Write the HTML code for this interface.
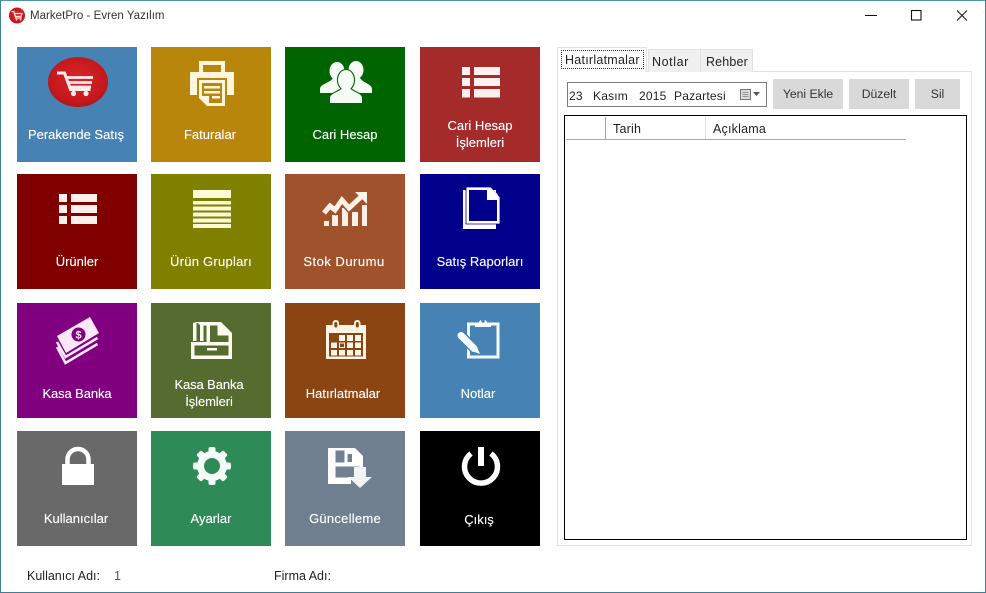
<!DOCTYPE html>
<html><head><meta charset="utf-8">
<style>
html,body{margin:0;padding:0;width:986px;height:593px;overflow:hidden;background:#fff}
body{position:relative;font-family:"Liberation Sans","DejaVu Sans",sans-serif;font-size:13px;color:#222}
#frame{position:absolute;left:0;top:0;width:984px;height:591px;border:1px solid #3f7f96;border-top-color:#4a93ad;pointer-events:none}
.t{position:absolute;width:120px;height:115px}
.l{position:absolute;left:0;width:120px;text-align:center;color:#fff;font-size:13px;line-height:17px;white-space:nowrap;text-shadow:0 0 .5px rgba(255,255,255,.7)}
.a{position:absolute;white-space:nowrap;line-height:16px}
.b{position:absolute;background:#d9d9d9;text-align:center;top:79px;height:30px;line-height:30px;color:#333;font-size:12.2px}
svg{position:absolute;left:0;top:0}
</style></head><body>
<div class="a" style="left:30px;top:8px;font-size:11.5px;color:#333;letter-spacing:.03px">MarketPro - Evren Yazılım</div>

<div class="t" style="left:17px;top:47px;background:#4682b4"><div class="l" style="top:79px;left:-1px">Perakende Satış</div></div>
<div class="t" style="left:151px;top:47px;background:#b8860b"><div class="l" style="top:79px;left:-1px">Faturalar</div></div>
<div class="t" style="left:285px;top:47px;background:#006400"><div class="l" style="top:79px">Cari Hesap</div></div>
<div class="t" style="left:420px;top:47px;background:#a52a2a"><div class="l" style="top:70px">Cari Hesap<br>İşlemleri</div></div>

<div class="t" style="left:17px;top:174px;background:#800000"><div class="l" style="top:79px">Ürünler</div></div>
<div class="t" style="left:151px;top:174px;background:#808000"><div class="l" style="top:79px;letter-spacing:.25px">Ürün Grupları</div></div>
<div class="t" style="left:285px;top:174px;background:#a0522d"><div class="l" style="top:79px;left:-1px;letter-spacing:.5px">Stok Durumu</div></div>
<div class="t" style="left:420px;top:174px;background:#00008b"><div class="l" style="top:79px">Satış Raporları</div></div>

<div class="t" style="left:17px;top:303px;background:#800080"><div class="l" style="top:82px;letter-spacing:-.1px">Kasa Banka</div></div>
<div class="t" style="left:151px;top:303px;background:#556b2f"><div class="l" style="top:73px;letter-spacing:-.1px;left:-2px">Kasa Banka<br>İşlemleri</div></div>
<div class="t" style="left:285px;top:303px;background:#8b4513"><div class="l" style="top:82px;left:-2px">Hatırlatmalar</div></div>
<div class="t" style="left:420px;top:303px;background:#4682b4"><div class="l" style="top:82px;left:-2px">Notlar</div></div>

<div class="t" style="left:17px;top:431px;background:#696969"><div class="l" style="top:79px;left:-1px">Kullanıcılar</div></div>
<div class="t" style="left:151px;top:431px;background:#2e8b57"><div class="l" style="top:79px">Ayarlar</div></div>
<div class="t" style="left:285px;top:431px;background:#708090"><div class="l" style="top:79px;letter-spacing:.25px">Güncelleme</div></div>
<div class="t" style="left:420px;top:431px;background:#000"><div class="l" style="top:80px;left:-1px">Çıkış</div></div>

<!-- right panel -->
<div style="position:absolute;left:557px;top:71px;width:413px;height:473px;border:1px solid #e2e2e2;background:#fff"></div>
<div style="position:absolute;left:648px;top:49px;width:51px;height:22px;background:#f0f0f0;border:1px solid #e2e2e2;border-bottom:0"></div>
<div style="position:absolute;left:700px;top:49px;width:51px;height:22px;background:#f0f0f0;border:1px solid #e2e2e2;border-bottom:0"></div>
<div style="position:absolute;left:557px;top:47px;width:90px;height:25px;background:#fff;border:1px solid #e2e2e2;border-bottom:0;box-sizing:border-box"></div>
<div style="position:absolute;left:561px;top:50px;width:83px;height:19px;border:1px dotted #333;box-sizing:border-box"></div>
<div class="a" style="left:565px;top:52px;font-size:12.5px;letter-spacing:.25px">Hatırlatmalar</div>
<div class="a" style="left:652px;top:54px;font-size:12.5px;letter-spacing:.6px">Notlar</div>
<div class="a" style="left:706px;top:54px;font-size:12.5px;letter-spacing:.15px">Rehber</div>

<div style="position:absolute;left:567px;top:82px;width:200px;height:25px;border:1px solid #7a7a7a;box-sizing:border-box;background:#fff"></div>
<div class="a" style="left:569px;top:88px;font-size:12px;letter-spacing:.2px">23</div>
<div class="a" style="left:593px;top:88px;font-size:12px;letter-spacing:.2px">Kasım</div>
<div class="a" style="left:639px;top:88px;font-size:12px;letter-spacing:.2px">2015</div>
<div class="a" style="left:674px;top:88px;font-size:12px;letter-spacing:.2px">Pazartesi</div>

<div class="b" style="left:773px;width:70px">Yeni Ekle</div>
<div class="b" style="left:849px;width:60px">Düzelt</div>
<div class="b" style="left:915px;width:45px">Sil</div>

<div style="position:absolute;left:564px;top:115px;width:403px;height:425px;border:1px solid #000;border-width:1.5px;box-sizing:border-box;background:#fff"></div>
<div style="position:absolute;left:566px;top:117px;width:340px;height:23px;border-bottom:1px solid #a8a8a8;box-sizing:border-box"></div>
<div style="position:absolute;left:605px;top:117px;width:1px;height:22px;background:#a8a8a8"></div>
<div style="position:absolute;left:705px;top:117px;width:1px;height:22px;background:#e0e0e0"></div>
<div class="a" style="left:613px;top:121px;font-size:12.5px;letter-spacing:.2px">Tarih</div>
<div class="a" style="left:713px;top:121px;font-size:12.5px;letter-spacing:.2px">Açıklama</div>

<div class="a" style="left:27px;top:568px;font-size:12.5px">Kullanıcı Adı:</div>
<div class="a" style="left:114px;top:568px;font-size:12.5px;color:#555">1</div>
<div class="a" style="left:274px;top:568px;font-size:12.5px">Firma Adı:</div>

<svg width="986" height="593" viewBox="0 0 986 593" xmlns="http://www.w3.org/2000/svg">
<defs>
<radialGradient id="r" cx=".5" cy=".45" r=".6"><stop offset="0" stop-color="#d8262a"/><stop offset=".75" stop-color="#c4181d"/><stop offset="1" stop-color="#a81418"/></radialGradient>
</defs>
<!-- title icon -->
<circle cx="17" cy="15.500" r="8" fill="url(#r)"/>
<path d="M11.500 11.500h2.300l2 6.500h6M14.500 13.500h7.500l-1 3h-5.600" fill="none" stroke="#ffdcdc" stroke-width="1.300"/>
<circle cx="16.500" cy="19.600" r=".9" fill="#ffdcdc"/><circle cx="20.500" cy="19.600" r=".9" fill="#ffdcdc"/>
<!-- window controls -->
<path d="M865 15.500h12" stroke="#111" stroke-width="1"/>
<rect x="911.500" y="10.500" width="9.500" height="9.500" fill="none" stroke="#111" stroke-width="1.100"/>
<path d="M957 10.500l10 10M967 10.500l-10 10" stroke="#111" stroke-width="1"/>
<!-- date picker icon -->
<rect x="740.500" y="89.500" width="10" height="10" fill="#dcdcdc" stroke="#777" stroke-width="1"/>
<path d="M742.500 92.500h6M742.500 94.500h6M742.500 96.500h6" stroke="#999" stroke-width="1"/>
<path d="M753 92h7l-3.500 4z" fill="#555"/>

<!-- cart -->
<ellipse cx="78" cy="82" rx="30" ry="25" fill="url(#r)"/>
<g fill="none" stroke="#ffeaea">
<path d="M57 73h7.500l6 16.500h20" stroke-width="3"/>
<path d="M65.500 77.500h27.500M67 82.500h25M69 87h22" stroke-width="2.800"/>
</g>
<circle cx="73.500" cy="93.500" r="2.600" fill="#ffeaea"/><circle cx="86" cy="93.500" r="2.600" fill="#ffeaea"/>

<!-- printer -->
<g fill="#fff6dd">
<path fill-rule="evenodd" d="M199 61h26v11h-4v-7h-18v7h-4z"/>
<path d="M190 72h44v23h-44z"/>
</g>
<rect x="197" y="78" width="30" height="30" fill="#b8860b"/>
<path fill="#fff6dd" fill-rule="evenodd" d="M199 80h26v26h-18l-8-8zM202 83v13h7v7h13V83z"/>
<path fill="#fff6dd" d="M204 86h16v2.500h-16zM204 91h16v2.500h-16zM212 96h8v2.500h-8z"/>

<!-- people -->
<g fill="#f7fbf5">
<ellipse cx="337" cy="71" rx="7.500" ry="9"/>
<ellipse cx="356" cy="70" rx="7.500" ry="9"/>
<path d="M320 93v-4c0-5 10-6 13-11h8c3 5 13 6 13 11v4z"/>
<path d="M339 93v-4c0-5 10-6 13-11h8c3 5 12 6 12 11v4z"/>
</g>
<g fill="#006400" stroke="#006400" stroke-width="2.200">
<ellipse cx="346" cy="80" rx="8" ry="10"/>
<path d="M330 103v-5c0-5 10-6 12-10h8c2 4 12 5 12 10v5z"/>
</g>
<g fill="#f7fbf5">
<ellipse cx="346" cy="80" rx="8" ry="10"/>
<path d="M330 103v-5c0-5 10-6 12-10h8c2 4 12 5 12 10v5z"/>
</g>

<!-- cari list -->
<g fill="#fff0f0">
<rect x="462" y="67" width="8" height="8"/><rect x="462" y="78" width="8" height="8"/><rect x="462" y="89" width="8" height="8.500"/>
<rect x="474" y="67" width="26" height="8"/><rect x="474" y="78" width="26" height="8"/><rect x="474" y="89" width="26" height="8.500"/>
</g>
<!-- urunler list -->
<g fill="#fff0ee">
<rect x="59" y="194" width="8" height="8"/><rect x="59" y="205" width="8" height="8"/><rect x="59" y="216" width="8" height="8"/>
<rect x="71" y="194" width="26" height="8"/><rect x="71" y="205" width="26" height="8"/><rect x="71" y="216" width="26" height="8"/>
</g>
<!-- urun gruplari -->
<g fill="#fffbd8">
<rect x="193" y="190" width="38" height="8"/><rect x="193" y="201" width="38" height="3.500"/><rect x="193" y="206.500" width="38" height="4"/><rect x="193" y="212.500" width="38" height="4"/><rect x="193" y="218.500" width="38" height="4"/><rect x="193" y="224" width="38" height="4"/>
</g>
<!-- stock -->
<g fill="#fff1e6">
<rect x="324" y="221" width="5" height="5"/><rect x="332" y="215" width="6" height="11"/><rect x="342" y="208" width="6" height="18"/><rect x="352" y="212" width="6" height="14"/><rect x="362" y="205" width="5" height="21"/>
</g>
<polyline points="324,213 330,206 335,210 342,200 349,208 362,196" fill="none" stroke="#a0522d" stroke-width="8"/>
<polyline points="324,213 330,206 335,210 342,200 349,208 362,196" fill="none" stroke="#fff1e6" stroke-width="5"/>
<path d="M355 192h12v12z" fill="#fff1e6"/>
<!-- document -->
<rect x="463" y="190" width="33" height="39" fill="#fff"/>
<path d="M466 187h24l10 10v27h-34z" fill="#fff" stroke="#00008b" stroke-width=".8"/>
<path d="M469 190h18v10h10v21h-28z" fill="#00008b"/>
<path d="M490 187v7.500h8z" fill="#fff"/>
<!-- money -->
<path fill="#fde8fb" d="M57 336l33-19 9 16-33 20z"/>
<circle cx="78.500" cy="334.500" r="7" fill="#800080"/>
<text x="78.500" y="338.500" font-size="11" font-weight="bold" fill="#fde8fb" text-anchor="middle" font-family="Liberation Sans">$</text>
<path d="M57 342l8.500 15 32-19M57 347l8.500 16 32-19" fill="none" stroke="#fde8fb" stroke-width="2.500"/>
<!-- kasa islem -->
<g fill="#fbfbef">
<path fill-rule="evenodd" d="M191 342h41v17h-41zM194.500 345.500v10h34v-10z"/>
<path d="M207 348h10v2.500h-10z"/>
<path d="M193 323h3.500v18h-3.500zM200 323h3.500v18h-3.500z"/>
<path fill-rule="evenodd" d="M193 322h28l11 11v9h-3.500v-6.500h-11v-10h-7.500v16.500h-3.500v-16.500h-3.500v-1h-4.500v-1.500h-2z"/>
</g>
<!-- calendar -->
<g>
<path fill="#fff5e5" d="M326 325h40v34h-40z"/>
<rect x="332.500" y="320" width="6.500" height="9" rx="3.200" fill="#fff5e5"/><rect x="354" y="320" width="6.500" height="9" rx="3.200" fill="#fff5e5"/>
<rect x="334.300" y="322" width="3" height="5.500" rx="1.500" fill="#8b4513"/><rect x="355.800" y="322" width="3" height="5.500" rx="1.500" fill="#8b4513"/>
<rect x="329" y="333" width="34" height="23.500" fill="#8b4513"/>
<g fill="#fff5e5">
<rect x="339" y="335" width="6" height="6"/><rect x="347" y="335" width="6" height="6"/><rect x="355" y="335" width="6" height="6"/>
<rect x="331" y="342.500" width="6" height="5.500"/><rect x="347" y="342.500" width="6" height="5.500"/><rect x="355" y="342.500" width="6" height="5.500"/>
<rect x="331" y="350" width="6" height="5.500"/><rect x="339" y="350" width="6" height="5.500"/><rect x="347" y="350" width="6" height="5.500"/><rect x="355" y="350" width="6" height="5.500"/>
</g>
<rect x="339.500" y="343" width="5" height="4.500" fill="none" stroke="#fff5e5" stroke-width="1"/>
</g>
<!-- notes -->
<g>
<rect x="468.500" y="324" width="29.500" height="33" fill="none" stroke="#f7fbff" stroke-width="3"/>
<path fill="#f7fbff" d="M475 327v-4h3.500a4.700 4.700 0 0 1 9 0h3.500v4z"/>
<circle cx="483" cy="321" r="1.800" fill="#4682b4"/>
<path d="M461 335.500l16 16" stroke="#4682b4" stroke-width="10"/>
<path d="M461 335.500l13 13" stroke="#f7fbff" stroke-width="7" stroke-linecap="round"/>
<path d="M476.500 346l-5 5 8.500 3z" fill="#f7fbff"/>
</g>
<!-- lock -->
<g fill="#fff">
<rect x="62" y="464" width="32" height="21"/>
<path d="M67.500 465v-5.500a10.500 10.500 0 0 1 21 0v5.500" fill="none" stroke="#fff" stroke-width="4.500"/>
</g>
<!-- gear -->
<g transform="translate(212 466)">
<g fill="#f4fbf6">
<circle r="15"/>
<rect x="-3.500" y="-19" width="7" height="38" rx="2"/>
<rect x="-3.500" y="-19" width="7" height="38" rx="2" transform="rotate(45)"/>
<rect x="-3.500" y="-19" width="7" height="38" rx="2" transform="rotate(90)"/>
<rect x="-3.500" y="-19" width="7" height="38" rx="2" transform="rotate(135)"/>
</g>
<circle r="8" fill="#2e8b57"/>
</g>
<!-- save -->
<g>
<path fill="#fff" d="M328 448h27l8 8v28h-35z"/>
<rect x="335.500" y="466.500" width="24" height="11" fill="#708090"/>
<rect x="335.500" y="450.500" width="9" height="12" fill="#708090"/>
<rect x="347.500" y="454" width="4.500" height="8" fill="#708090"/>
<path fill="#708090" d="M351 484h13v-9h-13z"/>
<path fill="#f2f4f6" d="M354 467h12v10h6l-12 11-12-11h6z"/>
</g>
<!-- power -->
<path d="M471 453.500a16.500 16.500 0 1 0 20 0" fill="none" stroke="#fff" stroke-width="5.500"/>
<rect x="478" y="447" width="6" height="19" fill="#fff"/>
</svg>
<div id="frame"></div>
</body></html>
